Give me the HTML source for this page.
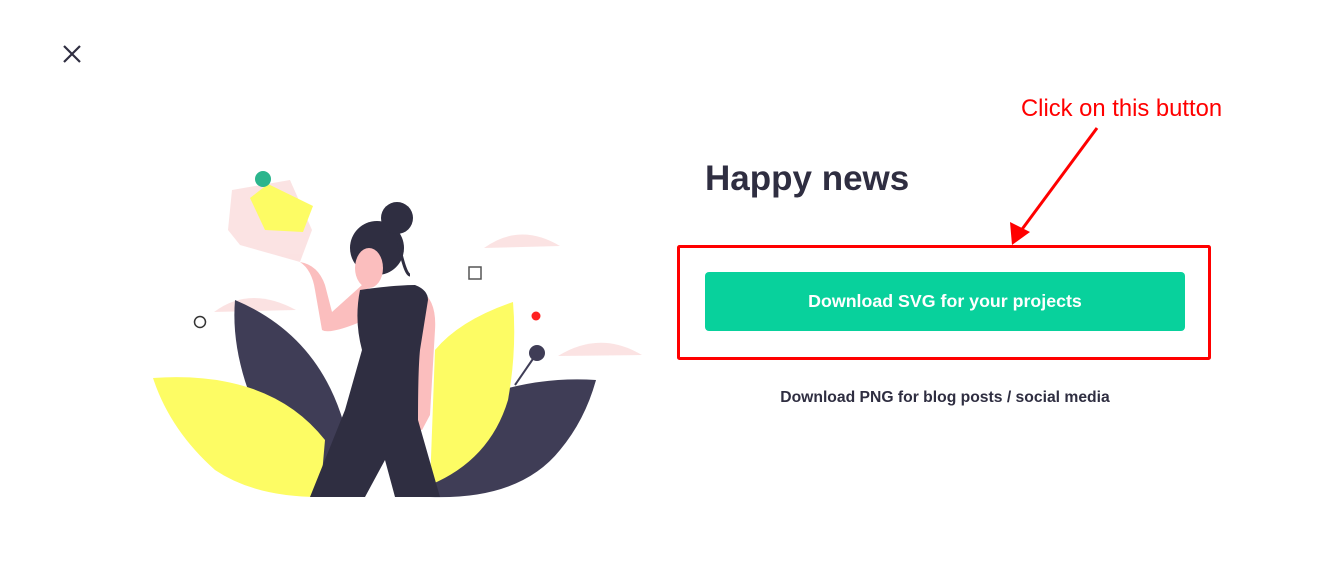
<!DOCTYPE html>
<html><head><style>
body{margin:0;width:1336px;height:581px;background:#fff;position:relative;overflow:hidden;font-family:"Liberation Sans",sans-serif}
.a{position:absolute}
</style></head><body>
<svg class="a" style="left:0;top:0" width="1336" height="581">
<path d="M64 46L80 62M80 46L64 62" stroke="#2f2e41" stroke-width="2.2"/>
<g fill="#f6b9b9" opacity="0.4">
<path d="M484 248Q520 222 560 246Z"/>
<path d="M558 356Q600 330 642 355Z"/>
<path d="M214 312Q250 285 296 310Z"/>
<path d="M228 230L232 190L290 180L312 230L300 262L240 245Z"/>
</g>
<path d="M235 300Q330 340 350 450L330 497L265 430Q230 360 235 300Z" fill="#3f3d56"/>
<path d="M153 378Q270 370 325 440L320 497Q255 497 215 470Q170 430 153 378Z" fill="#fdfc64"/>
<path d="M596 380Q520 375 450 410L430 497Q520 500 560 450Q585 420 596 380Z" fill="#3f3d56"/>
<path d="M513 302Q460 320 435 350L430 485Q490 460 508 400Q517 350 513 302Z" fill="#fdfc64"/>
<path d="M515 385L537 353" stroke="#3f3d56" stroke-width="2"/>
<circle cx="537" cy="353" r="8" fill="#3f3d56"/>
<path d="M300 262Q312 270 315 290L322 330Q330 335 365 320L372 290L362 285L332 312L325 285Q318 265 300 262Z" fill="#fbbebe"/>
<path d="M420 290Q437 300 435 330L430 415L422 430L413 428L418 400L412 310Z" fill="#fbbebe"/>
<circle cx="377" cy="248" r="27" fill="#2f2e41"/>
<circle cx="397" cy="218" r="16" fill="#2f2e41"/>
<path d="M398 240Q405 275 410 275" stroke="#2f2e41" stroke-width="3" fill="none"/>
<ellipse cx="369" cy="268" rx="14" ry="20" fill="#fbbebe"/>
<path d="M360 290Q395 285 415 285Q428 290 428 300L420 350Q418 370 418 420L440 497L395 497L385 460L365 497L310 497L345 410L362 350Q354 320 360 290Z" fill="#2f2e41"/>
<path d="M250 198L268 184L313 206L303 232L265 230Z" fill="#fdfc64"/>
<circle cx="263" cy="179" r="8" fill="#2bb58d"/>
<rect x="469" y="267" width="12" height="12" fill="none" stroke="#555" stroke-width="1.5"/>
<circle cx="200" cy="322" r="5.5" fill="none" stroke="#333" stroke-width="1.5"/>
<circle cx="536" cy="316" r="4.5" fill="#f22"/>
<rect x="678.5" y="246.5" width="531" height="112" fill="none" stroke="#f00" stroke-width="3" rx="1"/>
<path d="M1097 128L1020 232" stroke="#f00" stroke-width="3"/>
<path d="M1012 245L1010 222L1030 232Z" fill="#f00"/>
</svg>
<div class="a" style="left:1021px;top:95px;color:#f00;font-size:23.8px">Click on this button</div>
<div class="a" style="left:705px;top:159px;color:#2f2e41;font-size:35px;font-weight:bold">Happy news</div>
<div class="a" style="left:705px;top:272px;width:480px;height:59px;background:#08d19c;border-radius:4px;color:#fff;font-weight:bold;font-size:17.8px;line-height:59px;text-align:center">Download SVG for your projects</div>
<div class="a" style="left:705px;top:389px;width:480px;text-align:center;color:#2f2e41;font-weight:bold;font-size:15.7px">Download PNG for blog posts / social media</div>
</body></html>
